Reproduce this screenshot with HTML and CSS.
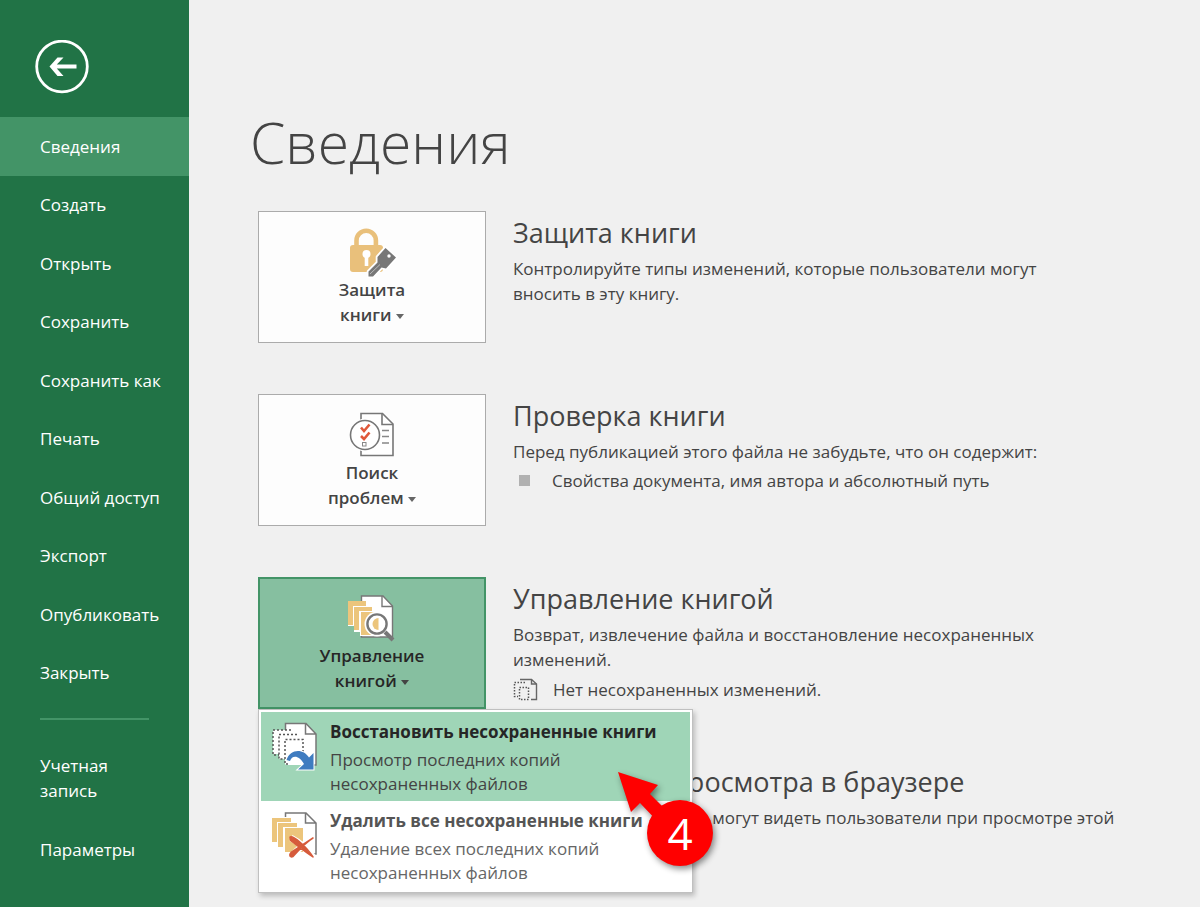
FILE: index.html
```html
<!DOCTYPE html>
<html lang="ru">
<head>
<meta charset="utf-8">
<meta name="viewport" content="width=device-width, initial-scale=1">
<title>Сведения</title>
<link rel="stylesheet" href="styles.css">
</head>
<body class="page">
<aside class="sidebar">
  <button class="back" type="button" aria-label="Назад">
    <svg class="back-icon" viewBox="0 0 54 54" aria-hidden="true">
      <circle cx="27" cy="26.500" r="25.300" fill="none" stroke="#fff" stroke-width="2.800"/>
      <path d="M14.500 26.500 22.500 17.500h6L21.800 24.600H41.500v4H21.800L28.500 36h-6z" fill="#fff"/>
    </svg>
  </button>
  <nav class="nav">
    <a class="nav-link active" href="#info" aria-current="page">Сведения</a>
    <a class="nav-link" href="#new">Создать</a>
    <a class="nav-link" href="#open">Открыть</a>
    <a class="nav-link" href="#save">Сохранить</a>
    <a class="nav-link" href="#saveas">Сохранить как</a>
    <a class="nav-link" href="#print">Печать</a>
    <a class="nav-link" href="#share">Общий доступ</a>
    <a class="nav-link" href="#export">Экспорт</a>
    <a class="nav-link" href="#publish">Опубликовать</a>
    <a class="nav-link" href="#close">Закрыть</a>
  </nav>
  <hr class="separator">
  <nav class="nav-extra">
    <a class="nav-link tall" href="#account">Учетная<br>запись</a>
    <a class="nav-link" href="#options">Параметры</a>
  </nav>
</aside>
<main class="main">
  <h1 class="title">Сведения</h1>
  <div class="sections">
    <section class="section">
      <button class="tile" type="button">
        <svg class="tile-icon" viewBox="0 0 48 48" aria-hidden="true">
          <path d="M8.500 19V12.500a9.700 9.700 0 0 1 19.400 0V19" fill="none" stroke="#e9c07b" stroke-width="4.600"/>
          <rect x="2" y="17" width="33" height="27" rx="3" fill="#e9c07b"/>
          <circle cx="18.500" cy="26" r="4" fill="#fff"/>
          <path d="M16.700 27h3.600v11h-3.600z" fill="#fff"/>
          <path d="M37.500 20 48 29.500 38 40.500 33.500 39.500 25 48.500H20.500V43.500L29.500 34.500V29z" fill="#777" stroke="#fff" stroke-width="3.600" stroke-linejoin="round" paint-order="stroke"/>
          <circle cx="41" cy="28" r="1.700" fill="#fff"/>
          <path d="M22 46 32 36.500" stroke="#bbb" stroke-width="1"/>
        </svg>
        <span class="tile-label">Защита<br>книги <span class="caret"></span></span>
      </button>
      <div class="info">
        <h2 class="heading">Защита книги</h2>
        <p class="text">Контролируйте типы изменений, которые пользователи могут<br>вносить в эту книгу.</p>
      </div>
    </section>
    <section class="section">
      <button class="tile" type="button">
        <svg class="tile-icon" viewBox="0 0 48 48" aria-hidden="true">
          <path d="M13 2.500H34.500L45 13V44.500H13z" fill="#fff" stroke="#777" stroke-width="1.600"/>
          <path d="M34 2.500V13.500H45" fill="none" stroke="#777" stroke-width="1.600"/>
          <path d="M34 19.500h7M34 25.500h7M34 32h7" stroke="#888" stroke-width="1.300"/>
          <circle cx="17" cy="24" r="16.300" fill="#fff"/>
          <circle cx="17" cy="24" r="14.500" fill="#fff" stroke="#777" stroke-width="1.600"/>
          <path d="M13 16.500 16 20 21.500 13.500M13 25 16 28 21.500 21.500" fill="none" stroke="#e0583a" stroke-width="2.600"/>
          <rect x="14.500" y="31.500" width="3.500" height="3.500" fill="none" stroke="#888"/>
        </svg>
        <span class="tile-label">Поиск<br>проблем <span class="caret"></span></span>
      </button>
      <div class="info">
        <h2 class="heading">Проверка книги</h2>
        <p class="text">Перед публикацией этого файла не забудьте, что он содержит:</p>
        <ul class="details"><li class="detail">Свойства документа, имя автора и абсолютный путь</li></ul>
      </div>
    </section>
    <section class="section">
      <button class="tile open" type="button" aria-expanded="true">
        <svg class="tile-icon" viewBox="0 0 48 48" aria-hidden="true">
          <path d="M13.500 2H35L44.500 12V43H13.500z" fill="#fff" stroke="#777" stroke-width="1.400"/>
          <path d="M34 2V12.500H44.500" fill="none" stroke="#777" stroke-width="1.400"/>
          <path d="M0 7H19V13H25V17H31V42H12V38H6V32H0z" fill="#fff"/>
          <path d="M0 7H18V12H5V31H0zM6 13H24V17H11V36H6zM13 18H31V41H13z" fill="#ecc57c"/>
          <circle cx="29" cy="30" r="12.500" fill="#fff"/>
          <path d="M37 38 45 46" stroke="#777" stroke-width="4"/>
          <circle cx="29" cy="30" r="9.600" fill="#fff" stroke="#777" stroke-width="2.400"/>
          <path d="M30.500 24A6 6 0 1 0 30.500 36z" fill="#ecc57c"/>
        </svg>
        <span class="tile-label">Управление<br>книгой <span class="caret"></span></span>
      </button>
      <div class="info">
        <h2 class="heading">Управление книгой</h2>
        <p class="text">Возврат, извлечение файла и восстановление несохраненных<br>изменений.</p>
        <p class="status">
          <svg class="status-icon" viewBox="0 0 26 24" aria-hidden="true">
            <path d="M7 1.500H18.500L23.500 6V21.500H18" fill="none" stroke="#666" stroke-width="1.400"/>
            <path d="M18.500 1.500V6H23.500" fill="none" stroke="#666" stroke-width="1.400"/>
            <path d="M12 4.500H1.500V18.500H5M6.500 9.500h9v12h-9z" fill="none" stroke="#555" stroke-width="1.500" stroke-dasharray="1.500 1.500"/>
          </svg>
          Нет несохраненных изменений.
        </p>
      </div>
      <div class="menu" role="menu">
        <button class="item selected" type="button" role="menuitem">
          <svg class="item-icon" viewBox="0 0 48 48" aria-hidden="true">
            <path d="M14.500 2H35L45 12V43H14.500z" fill="#fff"/>
            <path d="M14.500 8V1.500H35L45 12V43H43M34.500 1.500V12H45" fill="none" stroke="#777" stroke-width="1.500"/>
            <path d="M2 8H20V12H26V17H32V42H14V37H8V32H2z" fill="#fff"/>
            <path d="M20 8H2V33H8M26 12.500H8V37H14M32 30V17.500H14V42H18" fill="none" stroke="#555" stroke-width="1.500" stroke-dasharray="2 2"/>
            <path d="M15.500 38C19 27 32 26 38 35.500L42.500 31V47.500H27L33 42C28 33 21 33 19 39z" fill="#3f7cc0" stroke="#fff" stroke-width="2" paint-order="stroke"/>
          </svg>
          <span class="item-text"><strong class="item-title">Восстановить несохраненные книги</strong><span class="item-note">Просмотр последних копий<br>несохраненных файлов</span></span>
        </button>
        <button class="item" type="button" role="menuitem">
          <svg class="item-icon" viewBox="0 0 48 48" aria-hidden="true">
            <path d="M14.500 6V2H35L45 12V43H42M34.500 2V12H45" fill="#fff" stroke="#777" stroke-width="1.500"/>
            <path d="M1 7H20V12H27V16H33V42H13V37H7V32H1z" fill="#fff"/>
            <path d="M1 7H20V11H6V31H1zM7 12H26V16H12V36H7zM14 17H32V41H14z" fill="#ecc57c"/>
            <path d="M20 27C28 31 35 37 42 46M42 27C33 33 26 39 21 45" fill="none" stroke="#fff" stroke-width="6.500"/>
            <path d="M19 26C22 24 36 36 42 46 33 40 27 35 19.500 29.500zM42 27C35 31 26 41 22 45.500 19 47 17.500 44 20 41.500z" fill="#d65b3b" stroke="#d65b3b" stroke-width="1.500" stroke-linejoin="round"/>
          </svg>
          <span class="item-text"><strong class="item-title">Удалить все несохраненные книги</strong><span class="item-note">Удаление всех последних копий<br>несохраненных файлов</span></span>
        </button>
        <div class="callout">
          <svg class="callout-shape" viewBox="0 0 100 100" aria-hidden="true">
            <path d="M2 3 42 16 34 25 55 46 45 56 24 34 15 43z" fill="#f00"/>
            <circle cx="64" cy="64" r="33" fill="#f00"/>
          </svg>
          <span class="callout-number">4</span>
        </div>
      </div>
    </section>
    <section class="section">
      <button class="tile" type="button" aria-label="Параметры просмотра"></button>
      <div class="info">
        <h2 class="heading">Параметры просмотра в браузере</h2>
        <p class="text">Выбор листов, которые могут видеть пользователи при просмотре этой</p>
      </div>
    </section>
  </div>
</main>
</body>
</html>
```

FILE: styles.css
```css
* { box-sizing: border-box; }
.page {
  margin: 0;
  min-height: 100vh;
  display: flex;
  background: #f0f0f0;
  color: #444;
  font: 500 17px/25px "Open Sans", "Noto Sans", sans-serif;
}
button { font: inherit; color: inherit; cursor: pointer; }
.sidebar {
  flex: 0 0 189px;
  padding-top: 40px;
  background: #217346;
  color: #fff;
}
.back {
  display: block;
  margin: 0 0 23px 35px;
  padding: 0;
  border: 0;
  background: none;
}
.back-icon { display: block; width: 54px; height: 54px; }
.nav { display: grid; grid-auto-rows: 1fr; height: 585px; }
.nav-link {
  display: flex;
  align-items: center;
  min-height: 58px;
  padding: 0 0 0 40px;
  color: #fff;
  text-decoration: none;
  white-space: nowrap;
}
.nav-link.active { background: #439467; }
.separator { width: 109px; height: 2px; margin: 16px 40px; border: 0; background: #439467; }
.nav-link.tall { min-height: 84px; }
.nav-extra { display: grid; }
.main { flex: 1; min-width: 0; padding: 102px 32px 0 69px; }
.title { margin: 0 0 29px -8px; font-size: 57px; line-height: 80px; font-weight: 300; }
.sections { display: grid; gap: 51px; }
.section { position: relative; display: flex; gap: 27px; }
.tile {
  flex: 0 0 228px;
  height: 132px;
  display: flex;
  flex-direction: column;
  align-items: center;
  padding: 16px 0 0;
  border: 1px solid #ababab;
  background: #fdfdfd;
}
.tile.open { background: #86bfa0; border: 2px solid #439467; padding-top: 15px; color: #262626; }
.tile-icon { width: 48px; height: 48px; margin-bottom: 1px; flex: none; overflow: visible; }
.tile-label { font-weight: 600; }
.caret {
  display: inline-block;
  vertical-align: middle;
  border: 4px solid transparent;
  border-top: 5px solid #666;
  border-bottom: 0;
}
.open .caret { border-top-color: #444; }
.info { flex: 1; min-width: 0; padding-top: 4px; white-space: nowrap; }
.heading { margin: 0 0 5px; font-size: 27px; line-height: 36px; font-weight: 400; }
.text { margin: 0; }
.details { margin: 4px 0 0; padding: 0; list-style: none; }
.detail { display: flex; align-items: center; gap: 22px; }
.detail::before { content: ""; width: 11px; height: 11px; margin-left: 6px; background: #b1b1b1; }
.status { display: flex; align-items: center; gap: 14px; margin: 5px 0 0; }
.status-icon { width: 26px; height: 24px; }
.menu {
  position: absolute;
  z-index: 1;
  top: 132px;
  left: 0;
  width: 435px;
  padding: 2px;
  border: 1px solid #c0c0c0;
  background: #fff;
  box-shadow: 2px 3px 5px rgba(0, 0, 0, .22);
}
.item {
  display: flex;
  gap: 11px;
  width: 100%;
  padding: 8px 10px 5px;
  border: 0;
  background: none;
  text-align: left;
  white-space: nowrap;
  line-height: 24px;
  color: #666;
}
.item.selected { background: #9fd5b7; color: #444; }
.item-icon { flex: none; width: 48px; height: 48px; margin-top: 2px; overflow: visible; }
.item-text { display: block; }
.item-title { display: block; margin-bottom: 4px; font-weight: 700; color: #555; }
.selected .item-title { color: #262626; }
.item-note { display: block; }
.callout { position: absolute; left: 357px; top: 59px; width: 100px; height: 100px; }
.callout-shape { display: block; overflow: visible; filter: drop-shadow(2px 3px 3px rgba(0, 0, 0, .45)); }
.callout-number {
  position: absolute;
  inset: 31px 3px 3px 31px;
  display: grid;
  place-items: center;
  color: #fff;
  font-size: 44px;
  font-weight: 400;
}
```
